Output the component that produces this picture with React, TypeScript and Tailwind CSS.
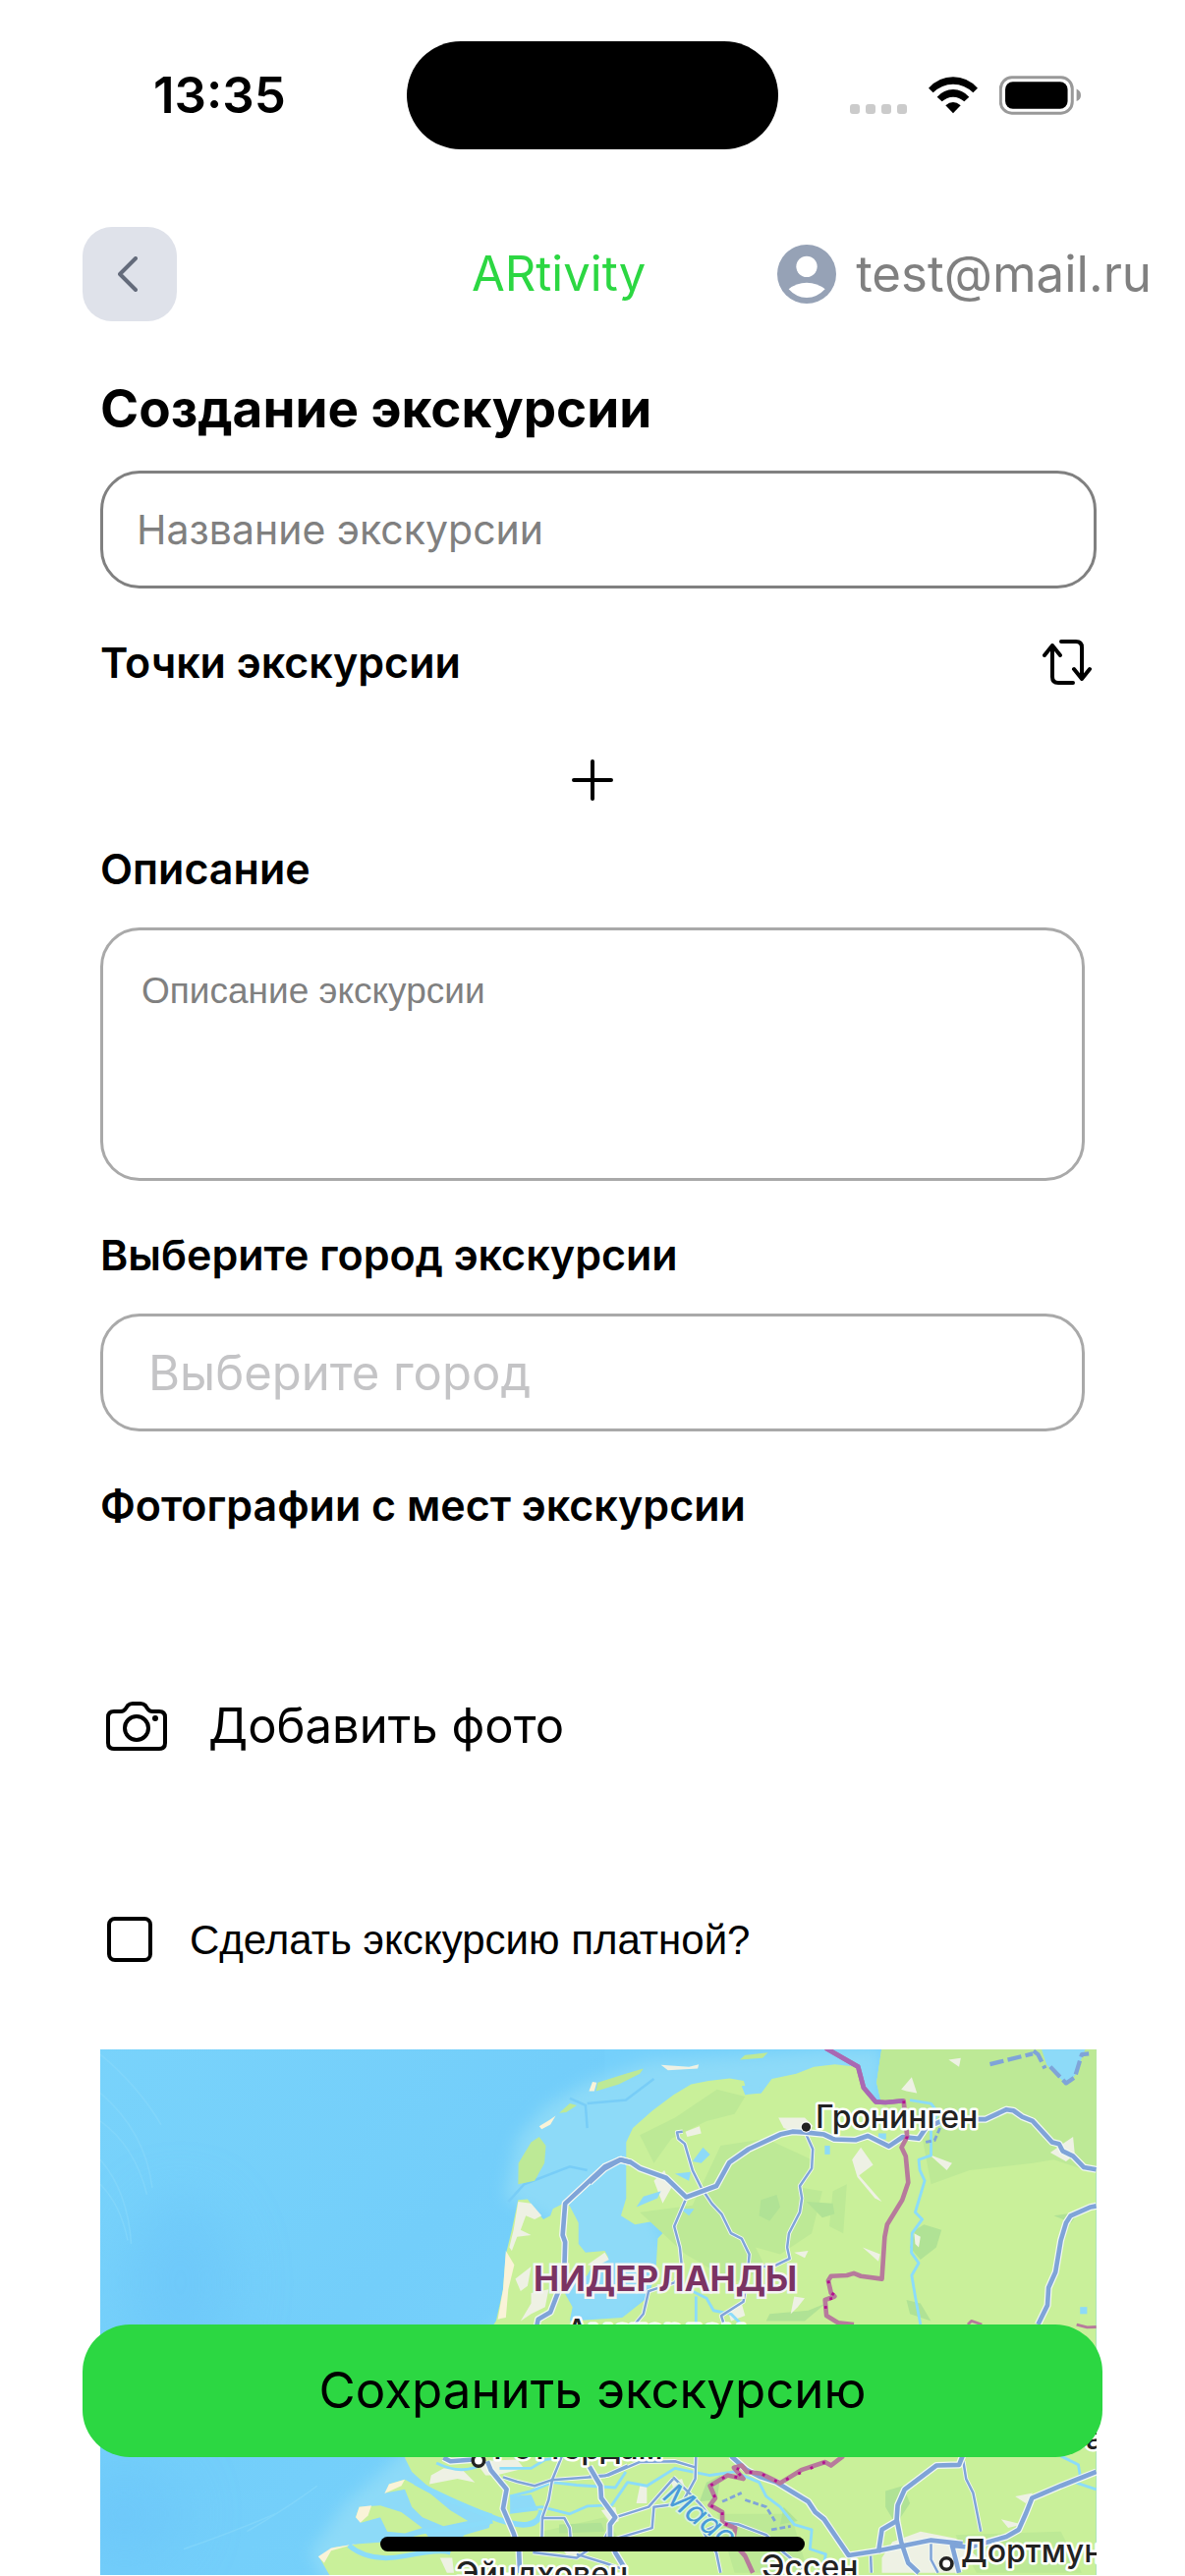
import React from "react";

function StatusBar() {
  return (
    <div className="mt-[42px] grid h-[110px] grid-cols-[414px_1fr_414px] items-center">
      <time className="pl-[156px] text-[51px] leading-[60px] font-semibold">13:35</time>
      <div className="h-[110px] rounded-full bg-black" />
      <div className="flex items-center pl-[73px]">
        <div className="mt-7 flex gap-[6px]">
          <span className="size-[10px] rounded-[3px] bg-[#cbcbcb]" />
          <span className="size-[10px] rounded-[3px] bg-[#cbcbcb]" />
          <span className="size-[10px] rounded-[3px] bg-[#cbcbcb]" />
          <span className="size-[10px] rounded-[3px] bg-[#cbcbcb]" />
        </div>
        <svg viewBox="0 0 150 112" className="ml-[22px] h-[38px] w-[50px]" aria-hidden="true">
          <path d="M0 34Q32 0 75 0T150 34L136 48Q110 22 75 22T14 48Z" />
          <path d="M26 61Q47 38 75 38T124 61L109 75Q94 61 75 61T41 75Z" />
          <path d="M52 87Q75 67 98 87L75 111Z" />
        </svg>
        <svg viewBox="0 0 247 118" className="ml-[22px] h-[40px] w-[83px]" aria-hidden="true">
          <rect x="4" y="5" width="217" height="108" rx="34" fill="none" stroke="#999" strokeWidth="9" />
          <rect x="18" y="18" width="189" height="82" rx="23" />
          <path d="M234 40Q247 46 247 59T234 77Z" fill="#999" />
        </svg>
      </div>
    </div>
  );
}

function Header() {
  return (
    <header className="mt-[79px] flex h-24 items-center pr-[34px] pl-[84px]">
      <button aria-label="Назад" className="flex size-24 items-center justify-center rounded-[30px] bg-[#dfe2ea] pr-1">
        <svg viewBox="0 0 20 36" className="h-9 w-5" fill="none" stroke="#646b7b" strokeWidth="4" strokeLinecap="round" strokeLinejoin="round">
          <path d="M18 2 2 18 18 34" />
        </svg>
      </button>
      <p className="ml-[300px] text-[49px] leading-[60px] text-[#2cd742]">ARtivity</p>
      <a href="#profile" className="ml-auto flex items-center gap-5 text-[51px] leading-[60px] text-[#808080]">
        <svg viewBox="0 0 180 180" className="size-[60px] shrink-0" aria-hidden="true">
          <circle cx="90" cy="90" r="90" fill="#96a2b6" />
          <circle cx="90" cy="67" r="32" fill="#fff" />
          <path d="M35 136Q58 116 90 116T146 136Q122 162 90 162T35 136Z" fill="#fff" />
        </svg>
        test@mail.ru
      </a>
    </header>
  );
}

const majorRoads = [
  "M1305 870 1310 845 1345 825 1368 765 1385 690 1387 625 1380 605 1387 515 1500 410 1545 390 1575 398",
  "M1456 455 1500 415 1545 390 1575 398 1600 415 1675 442 1732 497 1818 465 1855 398 1910 360 2000 318 2035 310 2070 312 2125 318 2155 332 2215 334 2250 322 2310 352 2350 325 2395 330 2415 300 2470 275 2585 275 2645 247 2665 250 2690 268 2720 280 2775 340 2795 345 2805 365 2835 380 2866 412 2901 418",
  "M2901 522 2885 525 2828 550 2815 570 2800 620 2785 710 2765 755 2762 805 2735 860",
  "M1040 1240 1060 1250 1125 1245",
  "M1165 1250 1175 1275 1220 1330 1210 1385 1240 1455 1255 1500 1258 1568",
  "M1456 1265 1488 1320 1490 1355 1530 1410 1515 1430 1515 1465 1530 1510 1560 1560",
  "M1860 1235 1905 1275 1945 1295 1990 1310 2080 1365 2100 1395 2125 1415 2195 1518 2280 1505 2430 1475 2520 1485",
  "M2280 1510 2290 1445 2332 1420 2335 1375 2355 1330 2445 1262 2510 1260 2520 1235",
  "M2332 1415 2345 1480 2365 1540 2395 1568",
  "M2901 1280 2800 1320 2718 1355 2700 1400 2680 1445 2645 1465 2540 1495 2490 1490 2510 1568",
];

const minorRoads = [
  "M1722 310 1706 312 1710 330 1728 345 1750 420 1775 470 1805 515 1833 545 1860 600 1890 615 1912 660 1905 740 1895 795 1832 835 1840 860",
  "M1730 505 1698 580 1714 640 1720 700 1700 740 1625 765 1610 830 1585 860",
  "M2075 320 2093 360 2090 415 2056 465 2062 500 2056 540 2025 600 2020 640 2027 672 1985 692 1920 698",
  "M1210 1295 1250 1308 1300 1320 1350 1303 1500 1292 1565 1262",
  "M1378 1235 1350 1303 1340 1360 1322 1410 1320 1500",
  "M1322 1412 1385 1412 1400 1440 1405 1500",
  "M1295 1510 1420 1525 1500 1470 1530 1410 1625 1380 1695 1300",
  "M1760 1235 1758 1300 1720 1370 1640 1380 1635 1440 1500 1480",
  "M1456 1293 1510 1290 1600 1252 1700 1250 1760 1268",
  "M1695 1295 1770 1370 1810 1420 1880 1430 1960 1460 2010 1510 2080 1568",
  "M1835 1427 1780 1450 1818 1510 1830 1568",
  "M2522 1250 2530 1300 2550 1340 2572 1450",
  "M2430 1480 2430 1530 2450 1568",
  "M2258 1520 2260 1568",
  "M1420 1515 1500 1540 1560 1560",
];

const rivers = [
  "M2370 220 2430 230 2450 255 2430 300 2430 378 2395 390 2398 420 2412 450 2385 540 2405 560 2376 600 2374 655 2395 685 2375 720 2385 780 2400 860",
  "M1200 1270 1290 1270 1330 1245 1370 1240",
  "M1230 1350 1290 1335 1350 1310 1420 1318 1530 1325 1560 1280",
  "M1240 1390 1320 1380 1400 1400 1450 1378 1520 1375 1565 1310 1620 1320 1700 1270 1800 1290 1870 1280 1940 1310 1960 1350 2000 1380 2040 1430 2090 1445 2085 1500 2130 1515 2120 1568",
  "M1720 750 1790 785 1810 820 1860 830 1890 860",
  "M1760 860 1760 780",
  "M2800 1235 2850 1260 2855 1290 2840 1310 2901 1330",
];

const creamPatches = [
  "1253,510 1290,515 1320,550 1300,560 1275,550 1260,590 1290,605 1250,610 1235,650 1228,640 1240,590",
  "1245,730 1290,695 1280,750 1260,765",
  "1290,770 1340,760 1330,810 1290,830 1260,850 1290,800",
  "1005,1290 1040,1270 1090,1270 1130,1310 1080,1300 1000,1315",
  "1130,1250 1250,1245 1270,1270 1190,1290 1160,1290",
  "1450,690 1500,655 1512,675 1475,695",
  "1995,270 2070,270 2095,295 2040,310 2010,300",
  "1660,120 1740,125 1768,118 1765,130 1680,135",
  "1640,450 1670,420 1690,470 1665,515",
  "2205,390 2230,355 2265,405 2225,435 2290,510 2270,500 2220,440",
  "2345,190 2375,155 2390,200 2360,195",
  "2480,105 2515,100 2510,125",
  "2425,375 2490,400 2475,420",
  "2770,370 2805,345 2835,325 2840,375 2815,395",
  "1730,310 1770,295 1775,315 1735,325",
  "2040,655 2080,650 2070,670",
  "2235,640 2285,660 2280,680",
  "1850,820 1890,800 1900,835 1860,850",
  "2382,600 2400,610 2395,640 2385,630",
  "2030,830 2040,780 2070,785 2050,810",
  "2290,1525 2320,1480 2400,1450 2500,1470 2560,1520 2500,1568 2290,1568",
  "1490,1390 1530,1380 1540,1420 1520,1430",
  "1370,1490 1410,1480 1430,1520 1390,1515",
  "1030,1525 1065,1525 1070,1568 1050,1568",
  "1690,1310 1720,1300 1730,1330 1700,1340",
  "1600,1320 1620,1320 1620,1370 1590,1370",
  "2670,1350 2720,1340 2700,1370",
  "2630,1415 2690,1430 2650,1440",
];

const deepPatches = [
  "1945,505 1990,490 2000,525 1970,565 1940,550",
  "2075,510 2150,515 2155,545 2120,555",
  "2385,590 2410,575 2460,590 2445,640 2400,675 2370,640",
  "2130,800 2080,820 1970,830 1960,850 2070,850",
  "2360,790 2400,800 2430,850 2370,830",
  "1790,1310 1830,1290 1820,1360 1770,1365",
  "2300,1335 2350,1320 2370,1370 2330,1430 2300,1380",
  "1370,1430 1490,1425 1500,1450 1370,1455",
  "2010,1380 2050,1420 2000,1430",
  "2780,550 2850,540 2830,570",
];

function TourMap() {
  return (
    <svg
      viewBox="0 0 1014 535"
      preserveAspectRatio="xMidYMin slice"
      className="block h-full min-h-[535px] w-full"
      role="img"
      aria-label="Карта"
    >
      <defs>
        <linearGradient id="sea" x1="0" y1="0" x2="1" y2="1">
          <stop offset="0" stopColor="#79d3fb" />
          <stop offset="0.5" stopColor="#73cefa" />
          <stop offset="1" stopColor="#78d3fa" />
        </linearGradient>
        <filter id="soft" x="-20%" y="-20%" width="140%" height="140%">
          <feGaussianBlur stdDeviation="22" />
        </filter>
        <filter id="deep" x="-60%" y="-60%" width="220%" height="220%">
          <feGaussianBlur stdDeviation="80" />
        </filter>
      </defs>
      <g transform="translate(-22 -27) scale(0.357)">
        <rect x="0" y="0" width="3000" height="1700" fill="#75d0fb" />
        <rect x="0" y="0" width="1500" height="1700" fill="url(#sea)" />
        <ellipse cx="290" cy="740" rx="150" ry="240" fill="#6bc5f9" opacity="0.6" filter="url(#deep)" />
        <ellipse cx="130" cy="1400" rx="170" ry="150" fill="#6bc5f9" opacity="0.6" filter="url(#deep)" />
        <g fill="none" stroke="#86d8fb" strokeWidth="4" opacity="0.7">
          <path d="M62 90Q170 180 235 290" />
          <path d="M62 200Q190 310 210 470" />
          <path d="M62 280Q160 350 195 490" />
          <path d="M62 390Q140 480 150 630" />
          <path d="M62 460Q120 520 140 620" />
          <path d="M480 1450Q600 1380 680 1320" />
          <path d="M300 1500Q420 1460 560 1400" />
        </g>
        <path
          d="M1215 500 1250 330 1330 240 1450 170 1620 110 2200 75H2290V250H2200L1700 250 1640 540 1700 700 1560 880 1380 860 1340 560Z"
          fill="#8ddaf8"
          filter="url(#soft)"
        />
        <path d="M1190 860 920 1230 760 1370 660 1510 700 1600H1300V860Z" fill="#8ddaf8" filter="url(#soft)" />
        <g fill="none" stroke="#78cdf7" strokeWidth="7">
          <path d="M1225 510 1270 460 1400 410 1450 420" />
          <path d="M1400 215 1445 235 1450 300" />
          <path d="M1450 230 1560 220 1640 160" />
        </g>
        <g fill="#c9f09a">
          <path d="M1253 505 1280 503 1300 530 1325 560 1345 550 1352 530 1385 513 1400 522 1425 570 1425 630 1445 655 1500 650 1510 668 1465 692 1450 720 1380 760 1408 810 1400 850 1550 840 1626 780 1646 700 1651 615 1691 572 1641 565 1586 575 1546 550 1561 500 1561 340 1580 300 1636 250 1696 205 1746 175 1796 165 1856 158 1896 165 1906 200 1946 200 1976 160 2046 145 2096 125 2156 118 2220 125 2236 185 2270 225 2350 225 2365 245 2290 235 2275 170 2289 75H2901V1600H1070L1060 1500 1100 1460 1170 1440 1180 1400 1080 1370 1000 1325 950 1280 930 1240 1190 850 1210 760 1218 660 1235 590Z" />
          <path d="M875 1340 885 1315 930 1302 1000 1340 1060 1390 1110 1420 1040 1435 980 1410 950 1380 930 1330Z" />
          <path d="M790 1410 800 1380 860 1376 920 1395 980 1440 930 1455 880 1450 860 1410 805 1425Z" />
          <path d="M685 1522 730 1495 800 1485 900 1478 990 1455 1010 1485 1110 1530 1100 1600 730 1600Z" />
        </g>
        <g fill="#bde996">
          <path d="M1253 460 1254 400 1290 340 1313 325 1332 350 1328 400 1300 450Z" />
          <path d="M1370 257 1400 230 1420 235 1390 255Z" />
          <path d="M1475 195 1480 170 1560 145 1610 130 1600 145 1540 175Z" />
          <path d="M1885 105 1900 92 1965 85 1950 100Z" />
          <path d="M1700 270 1820 190 1900 210 1870 260 1790 280 1690 330 1640 400 1600 320Z" />
          <path d="M1600 540 1750 520 1830 350 1960 330 2090 390 2060 470 2120 480 2090 600 2000 660 1930 640 1960 700 1870 740 1730 660Z" />
          <path d="M2289 75H2901V430L2780 390 2720 400 2540 420 2430 460 2400 300 2290 235 2275 170Z" />
          <path d="M2150 480 2190 460 2180 600 2140 580Z" />
          <path d="M1320 1450 1500 1410 1540 1470 1330 1490Z" />
          <path d="M1820 1400 2030 1400 2080 1568 1870 1568Z" />
          <path d="M2500 1460 2800 1450 2860 1568 2560 1568Z" />
        </g>
        <g fill="#b0e295">
          {deepPatches.map((p) => (
            <polygon key={p} points={p} />
          ))}
        </g>
        <g fill="#eef1e4">
          {creamPatches.map((p) => (
            <polygon key={p} points={p} />
          ))}
        </g>
        <g fill="#faf3d8">
          <path d="M1218 650 1242 690 1225 760 1218 840 1195 845 1210 760Z" />
          <path d="M1313 295 1345 275 1360 265 1345 290 1320 303Z" />
          <path d="M1455 195 1465 168 1477 170 1470 195Z" />
          <path d="M872 1342 885 1315 930 1302 920 1320Z" />
          <path d="M790 1410 800 1380 835 1376 825 1405 803 1425Z" />
          <path d="M683 1522 720 1497 790 1485 720 1505 700 1540Z" />
        </g>
        <g fill="#8ddaf8">
          <path d="M1890 180 1940 175 1945 200 1900 205Z" />
          <path d="M1750 395 1780 355 1800 375 1775 400Z" />
          <path d="M1590 525 1610 495 1660 480 1650 500Z" />
          <path d="M1700 430 1745 425 1740 450Z" />
          <path d="M1715 530 1755 530 1740 550Z" />
          <path d="M2745 75H2870L2840 150 2815 175 2760 120Z" />
          <path d="M2127 350H2142V375H2127Z" />
          <path d="M2280 315H2302V332H2280Z" />
          <path d="M1230 1350 1290 1345 1310 1390 1230 1400Z" />
          <path d="M2855 810H2875V830H2855Z" />
        </g>
        <g fill="none" stroke="#8bdcfa" strokeWidth="8" strokeLinejoin="round">
          {rivers.map((d) => (
            <path key={d} d={d} />
          ))}
          <path d="M960 1310Q1050 1360 1180 1410T1320 1390" strokeWidth="16" />
          <path d="M1020 1255Q1090 1290 1150 1260" />
          <path d="M980 1450Q1090 1440 1180 1420" strokeWidth="14" />
          <path d="M770 1490Q830 1540 930 1520T1060 1510" strokeWidth="14" />
        </g>
        <g fill="none" strokeLinejoin="round">
          <g stroke="#f2f8f4" strokeWidth="12">
            {minorRoads.map((d) => (
              <path key={d} d={d} />
            ))}
          </g>
          <g stroke="#7fa4d8" strokeWidth="7">
            {minorRoads.map((d) => (
              <path key={d} d={d} />
            ))}
          </g>
          <g stroke="#f2f8f4" strokeWidth="20">
            {majorRoads.map((d) => (
              <path key={d} d={d} />
            ))}
          </g>
          <g stroke="#7fa4d8" strokeWidth="13">
            {majorRoads.map((d) => (
              <path key={d} d={d} />
            ))}
          </g>
          <g stroke="#7fa4d8" strokeWidth="12" strokeDasharray="40 12">
            <path d="M2598 118 2720 88" />
            <path d="M2722 80 2735 90 2755 130" />
            <path d="M2770 125 2815 172 2840 155 2860 90 2880 88" />
          </g>
          <g stroke="#7fa4d8" strokeWidth="8" strokeDasharray="16 8">
            <path d="M1835 1365 1890 1340" />
            <path d="M1900 1360 1960 1380 1985 1420" />
            <path d="M1975 1445 2030 1435" />
            <path d="M2415 340 2440 335 2460 290" />
          </g>
          <g stroke="#b77a9c" strokeWidth="13">
            <path d="M2130 72 2222 125 2238 185 2272 225 2300 227 2352 222 2362 325 2346 355 2358 380 2365 455 2348 505 2305 575 2298 610 2290 730 2230 722 2210 714 2190 720 2145 722 2137 735 2145 770 2155 780 2128 790 2132 835 2165 855 2210 860" />
            <path d="M2180 1235 2145 1262 2128 1252 2060 1275 2000 1312 1945 1285 1905 1280 1890 1262 1868 1268 1895 1300 1850 1290 1800 1320 1815 1355 1800 1375 1835 1395 1835 1425 1872 1440 1865 1480 1900 1520 1922 1568" />
            <path d="M2535 860 2545 850 2575 860" strokeWidth="8" />
            <path d="M2845 860 2875 868 2901 867" strokeWidth="8" />
          </g>
          <path d="M2130 72 2222 125 2238 185 2272 225 2300 227 2352 222" stroke="#a968b4" strokeWidth="13" />
          <g stroke="#b3128f" strokeWidth="8" strokeDasharray="8 30">
            <path d="M2352 222 2362 325 2346 355" strokeDasharray="8 94" />
            <path d="M2137 735 2145 770 2165 782 2128 790 2132 835" />
            <path d="M2128 1252 2030 1295 2000 1312 1945 1285 1905 1280 1868 1268 1895 1300 1850 1290 1800 1320 1815 1355 1800 1375 1835 1395 1835 1425 1872 1440" />
          </g>
        </g>
        <circle cx="2074" cy="297" r="16" fill="#fff" />
        <circle cx="2074" cy="297" r="13" fill="#222" />
        <circle cx="1140" cy="1248" r="16" fill="#fff" stroke="#222" strokeWidth="10" />
        <circle cx="2474" cy="1542" r="16" fill="#fff" stroke="#222" strokeWidth="10" />
      </g>
      <g
        className="text-[32px] font-medium"
        fill="#222"
        stroke="#fff"
        strokeWidth="5"
        strokeLinejoin="round"
        paintOrder="stroke"
      >
        <text x="728" y="80">Гронинген</text>
        <text x="474" y="298">Амстердам</text>
        <text x="400" y="417">Роттердам</text>
        <text x="362" y="545">Эйндховен</text>
        <text x="673" y="538">Эссен</text>
        <text x="876" y="522">Дортмунд</text>
        <text x="1003" y="407">а</text>
      </g>
      <text x="441" y="246" className="text-[35px] font-bold" fill="#7b3363" stroke="#f4f4f4" strokeWidth="5" paintOrder="stroke">
        НИДЕРЛАНДЫ
      </text>
      <text
        x="571"
        y="457"
        transform="rotate(38 571 457)"
        className="text-[31px] italic"
        fill="#4a9bd9"
        stroke="#d8f4e0"
        strokeWidth="3"
        paintOrder="stroke"
      >
        Маас
      </text>
    </svg>
  );
}

export default function App() {
  return (
    <div className="flex min-h-screen flex-col overflow-x-hidden bg-white font-['Inter','Noto_Sans',sans-serif] text-black">
      <StatusBar />
      <Header />
      <main className="flex flex-1 flex-col pr-[90px] pl-[102px]">
        <h1 className="mt-[56px] text-[53px] leading-[66px] font-bold">Создание экскурсии</h1>
        <input
          aria-label="Название экскурсии"
          placeholder="Название экскурсии"
          className="mt-[30px] h-[120px] w-full rounded-[40px] border-3 border-[#808080] px-[34px] text-[41px] placeholder:text-[#808080]"
        />
        <div className="mt-[48px] flex h-[54px] items-center justify-between pr-[5px]">
          <h2 className="text-[43px] leading-[54px] font-semibold">Точки экскурсии</h2>
          <button aria-label="Изменить порядок точек">
            <svg viewBox="0 0 50 48" className="h-[48px] w-[50px]" fill="none" stroke="#000" strokeWidth="4" strokeLinecap="round" strokeLinejoin="round">
              <path d="M2 17 10 7 18 17M10 7V39Q10 45 16 45H31" />
              <path d="M32 31 40 41 48 31M40 41V9Q40 3 34 3H19" />
            </svg>
          </button>
        </div>
        <div className="mt-[72px] flex justify-center pr-3">
          <button aria-label="Добавить точку" className="size-[42px]">
            <svg viewBox="0 0 42 42" className="size-[42px]" stroke="#000" strokeWidth="4" strokeLinecap="round">
              <path d="M21 2V40M2 21H40" />
            </svg>
          </button>
        </div>
        <h2 className="mt-[42px] text-[43px] leading-[54px] font-semibold">
          <label htmlFor="about">Описание</label>
        </h2>
        <div className="mt-[33px] pr-3">
          <textarea
            id="about"
            placeholder="Описание экскурсии"
            className="block h-[258px] w-full resize-none rounded-[40px] border-3 border-[#a9a9a9] px-[39px] py-[40px] font-['Liberation_Sans',sans-serif] text-[37px] leading-[44px] placeholder:text-[#808080]"
          />
        </div>
        <h2 className="mt-[48px] text-[43px] leading-[54px] font-semibold">
          <label htmlFor="city">Выберите город экскурсии</label>
        </h2>
        <div className="mt-[33px] pr-3">
          <input
            id="city"
            placeholder="Выберите город"
            className="block h-[120px] w-full rounded-[40px] border-3 border-[#a9a9a9] px-[46px] text-[49px] placeholder:text-[#c4c4c6]"
          />
        </div>
        <h2 className="mt-[48px] text-[43px] leading-[54px] font-semibold">Фотографии с мест экскурсии</h2>
        <button className="mt-[166px] flex h-[64px] items-center gap-[42px] self-start pl-[6px] text-[49px]">
          <svg viewBox="0 0 62 50" className="h-[50px] w-[62px]" fill="none" stroke="#000" strokeWidth="4" strokeLinejoin="round">
            <path d="M8 10H15Q18 10 20 7L22 4Q24 2 27 2H35Q38 2 40 4L42 7Q44 10 47 10H54Q60 10 60 16V42Q60 48 54 48H8Q2 48 2 42V16Q2 10 8 10Z" />
            <circle cx="31" cy="27" r="12" />
            <circle cx="50" cy="17" r="3" fill="#000" stroke="none" />
          </svg>
          Добавить фото
        </button>
        <label className="mt-[155px] flex h-[60px] items-center gap-[38px] self-start pl-[7px] font-['Liberation_Sans',sans-serif] text-[42px]">
          <input type="checkbox" className="size-[46px] appearance-none rounded-[8px] border-4 border-black checked:bg-black" />
          Сделать экскурсию платной?
        </label>
        <div className="mt-[82px] min-h-[535px] flex-1">
          <TourMap />
        </div>
      </main>
      <button className="fixed inset-x-[84px] bottom-[121px] h-[135px] rounded-[48px] bg-[#2cd742] text-[51px]">
        Сохранить экскурсию
      </button>
      <div className="fixed bottom-[25px] left-1/2 h-[15px] w-[432px] -translate-x-1/2 rounded-full bg-black" />
    </div>
  );
}
